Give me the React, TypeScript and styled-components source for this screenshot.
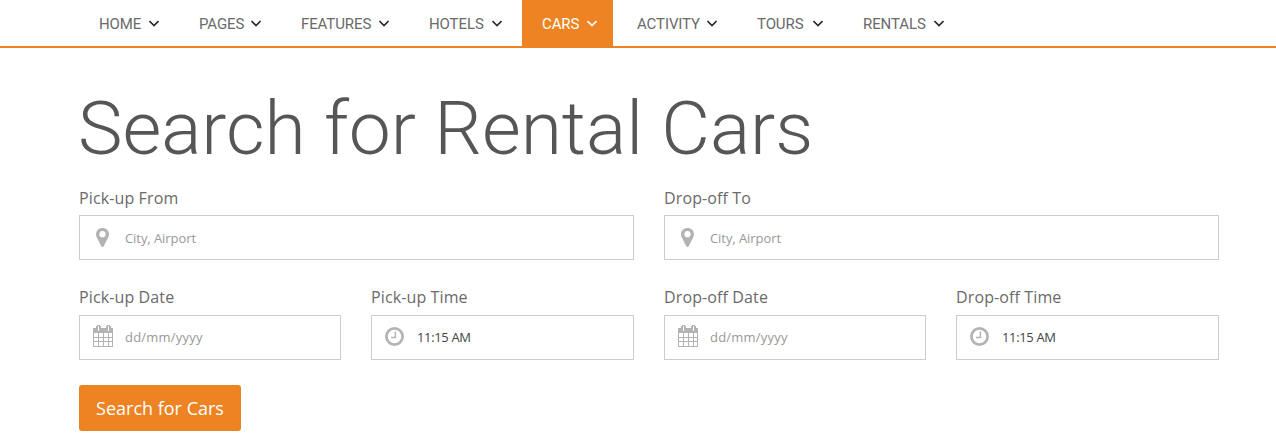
import React from "react";
import styled, { createGlobalStyle } from "styled-components";

const Global = createGlobalStyle`
  *{box-sizing:border-box}
  body{margin:0;background:#fff;font-family:"Open Sans",sans-serif;color:#565656;overflow:hidden}
`;
const Nav = styled.nav`
  display:flex;height:48px;padding-left:79px;border-bottom:2px solid #ed8323;
`;
const NavItem = styled.a<{ $w: number; $active?: boolean }>`
  display:flex;align-items:center;justify-content:space-between;height:46px;
  width:${p => p.$w}px;padding:1px ${p => (p.$active ? 16 : 20)}px 0 20px;
  font:400 15px/20px Roboto,sans-serif;white-space:nowrap;letter-spacing:-.1px;
  color:${p => (p.$active ? "#fff" : "#6a6a6a")};
  background:${p => (p.$active ? "#ed8323" : "transparent")};
  margin-right:${p => (p.$active ? 4 : 0)}px;
  svg{color:${p => (p.$active ? "#fff" : "#2b2b2b")};}
`;
const Main = styled.main`padding:42px 57px 0 79px;`;
const Title = styled.h1`
  margin:0 0 0 -1px;height:100px;font:300 75px/76px Roboto,sans-serif;color:#565656;
  letter-spacing:-.03px;white-space:nowrap;
`;
const Row = styled.div<{ $columns: string; $height: number; $label: number }>`
  display:grid;grid-template-columns:${p => p.$columns};column-gap:30px;height:${p => p.$height}px;
  label{height:${p => p.$label}px;}
`;
const Label = styled.label`display:block;font-size:16px;line-height:16px;color:#6a6a6a;letter-spacing:.12px;`;
const Box = styled.div<{ $raised: boolean }>`
  display:flex;align-items:center;height:45px;border:1px solid #ccc;
  padding-bottom:${p => (p.$raised ? 2 : 0)}px;
`;
const IconSlot = styled.span`
  display:flex;width:45px;justify-content:center;color:#b3b3b3;
`;
const Value = styled.span<{ $dark?: boolean; $spacing: number }>`
  font-size:13px;line-height:18px;color:${p => (p.$dark ? "#444" : "#999")};letter-spacing:${p => p.$spacing}px;
`;
const Submit = styled.button`
  display:block;width:162px;height:46px;padding:0;border:0;border-radius:3px;
  background:#ed8323;color:#fff;font:400 18px "Open Sans",sans-serif;
`;

const Chevron = () => (
  <svg width="10" height="7" viewBox="0 0 10 7" fill="none" stroke="currentColor" strokeWidth="1.6"><path d="M.5 1 5 5.500 9.500 1" /></svg>
);
const Pin = () => (
  <svg width="13" height="19" viewBox="0 0 13 19" fill="currentColor" fillRule="evenodd"><path d="M6.500 0C2.700 0 0 2.700 0 6.300c0 1.200.3 2 .7 3L5.300 18.300q1.200 1.400 2.400 0L12.300 9.300c.4-1 .7-1.800.7-3C13 2.700 10.300 0 6.500 0zM6.500 3.100a3.100 3.100 0 1 1 0 6.200 3.100 3.100 0 0 1 0-6.200z" /></svg>
);
const Calendar = () => (
  <svg width="21" height="23" viewBox="-1 0 21 23" fill="currentColor" shapeRendering="crispEdges">
    <path d="M0 3h3V1h1V0h3v1h1v2h5V1h1V0h3v1h1v2h2v19H0zM5 1v5h1V1zM15 1v5h1V1zM1 8v4h4V8zM6 8v4h4V8zM11 8v4h4V8zM16 8v4h3V8zM1 13v3h4v-3zM6 13v3h4v-3zM11 13v3h4v-3zM16 13v3h3v-3zM1 17v4h4v-4zM6 17v4h4v-4zM11 17v4h4v-4zM16 17v4h3v-4z" fillRule="evenodd" />
  </svg>
);
const Clock = () => (
  <svg width="19" height="19" viewBox="0 0 19 19" fill="none" stroke="currentColor"><circle cx="9.500" cy="9.500" r="8.100" strokeWidth="2.700" /><path d="M10.400 4.500v5.900H6" strokeWidth="1.500" /></svg>
);
const icons = { pin: Pin, calendar: Calendar, clock: Clock };

function Field({ label, icon, value, dark, spacing = 0 }: { label: string; icon: keyof typeof icons; value: string; dark?: boolean; spacing?: number }) {
  const Icon = icons[icon];
  return (
    <div>
      <Label>{label}</Label>
      <Box $raised={icon !== "pin"}><IconSlot><Icon /></IconSlot><Value $dark={dark} $spacing={spacing}>{value}</Value></Box>
    </div>
  );
}

const items: [string, number][] = [["HOME", 100], ["PAGES", 102], ["FEATURES", 128], ["HOTELS", 113], ["CARS", 91], ["ACTIVITY", 120], ["TOURS", 106], ["RENTALS", 121]];

export default function App() {
  return (
    <>
      <Global />
      <Nav>
        {items.map(([t, w]) => <NavItem key={t} $w={w} $active={t === "CARS"}>{t}<Chevron /></NavItem>)}
      </Nav>
      <Main>
        <Title>Search for Rental Cars</Title>
        <Row $columns="555px 555px" $height={99} $label={25}>
          <Field label="Pick-up From" icon="pin" value="City, Airport" spacing={-0.07} />
          <Field label="Drop-off To" icon="pin" value="City, Airport" spacing={-0.07} />
        </Row>
        <Row $columns="262px 263px 262px 263px" $height={96} $label={26}>
          <Field label="Pick-up Date" icon="calendar" value="dd/mm/yyyy" spacing={0.22} />
          <Field label="Pick-up Time" icon="clock" value="11:15 AM" dark spacing={-0.35} />
          <Field label="Drop-off Date" icon="calendar" value="dd/mm/yyyy" spacing={0.22} />
          <Field label="Drop-off Time" icon="clock" value="11:15 AM" dark spacing={-0.35} />
        </Row>
        <Submit>Search for Cars</Submit>
      </Main>
    </>
  );
}
